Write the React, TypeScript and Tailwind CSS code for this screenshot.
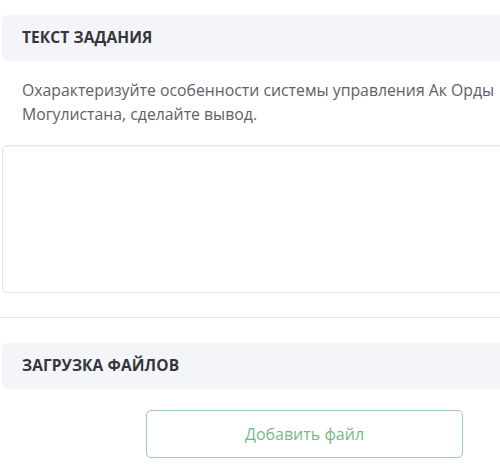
import React from "react";

function SectionHeader({ title }: { title: string }) {
  return (
    <div className="h-[46px] w-[520px] ml-[2px] rounded-l-[6px] bg-[#f4f5f8] flex items-center pl-5">
      <h2 className="text-[15.5px] font-bold uppercase tracking-[0.1px] text-[#34363b]">{title}</h2>
    </div>
  );
}

export default function App() {
  return (
    <div
      className="w-[500px] h-[466px] overflow-hidden bg-white"
      style={{ fontFamily: '"Open Sans", "Noto Sans", sans-serif' }}
    >
      <div className="pt-[15px]">
        <SectionHeader title="Текст задания" />

        {/* Task text */}
        <p className="mt-[17px] ml-[22px] w-[478px] text-[15.8px] leading-[24px] text-[#5f6166]">
          Охарактеризуйте особенности системы управления Ак Орды Могулистана, сделайте вывод.
        </p>

        {/* Answer field */}
        <textarea className="block mt-[19px] ml-[2px] w-[520px] h-[148px] rounded-[5px] border border-[#e2e2e2] shadow-[inset_0_1px_2px_rgba(0,0,0,0.04)] resize-none outline-none" />

        <div className="mt-[24px] h-px bg-[#e4e4e4]" />

        <div className="mt-[25px]">
          <SectionHeader title="Загрузка файлов" />
        </div>

        <div className="mt-[21px] pl-[146px]">
          <button className="w-[317px] h-[48px] rounded-[5px] border border-[#9dcfa8] text-[16px] text-[#76b986] bg-white">
            Добавить файл
          </button>
        </div>
      </div>
    </div>
  );
}
